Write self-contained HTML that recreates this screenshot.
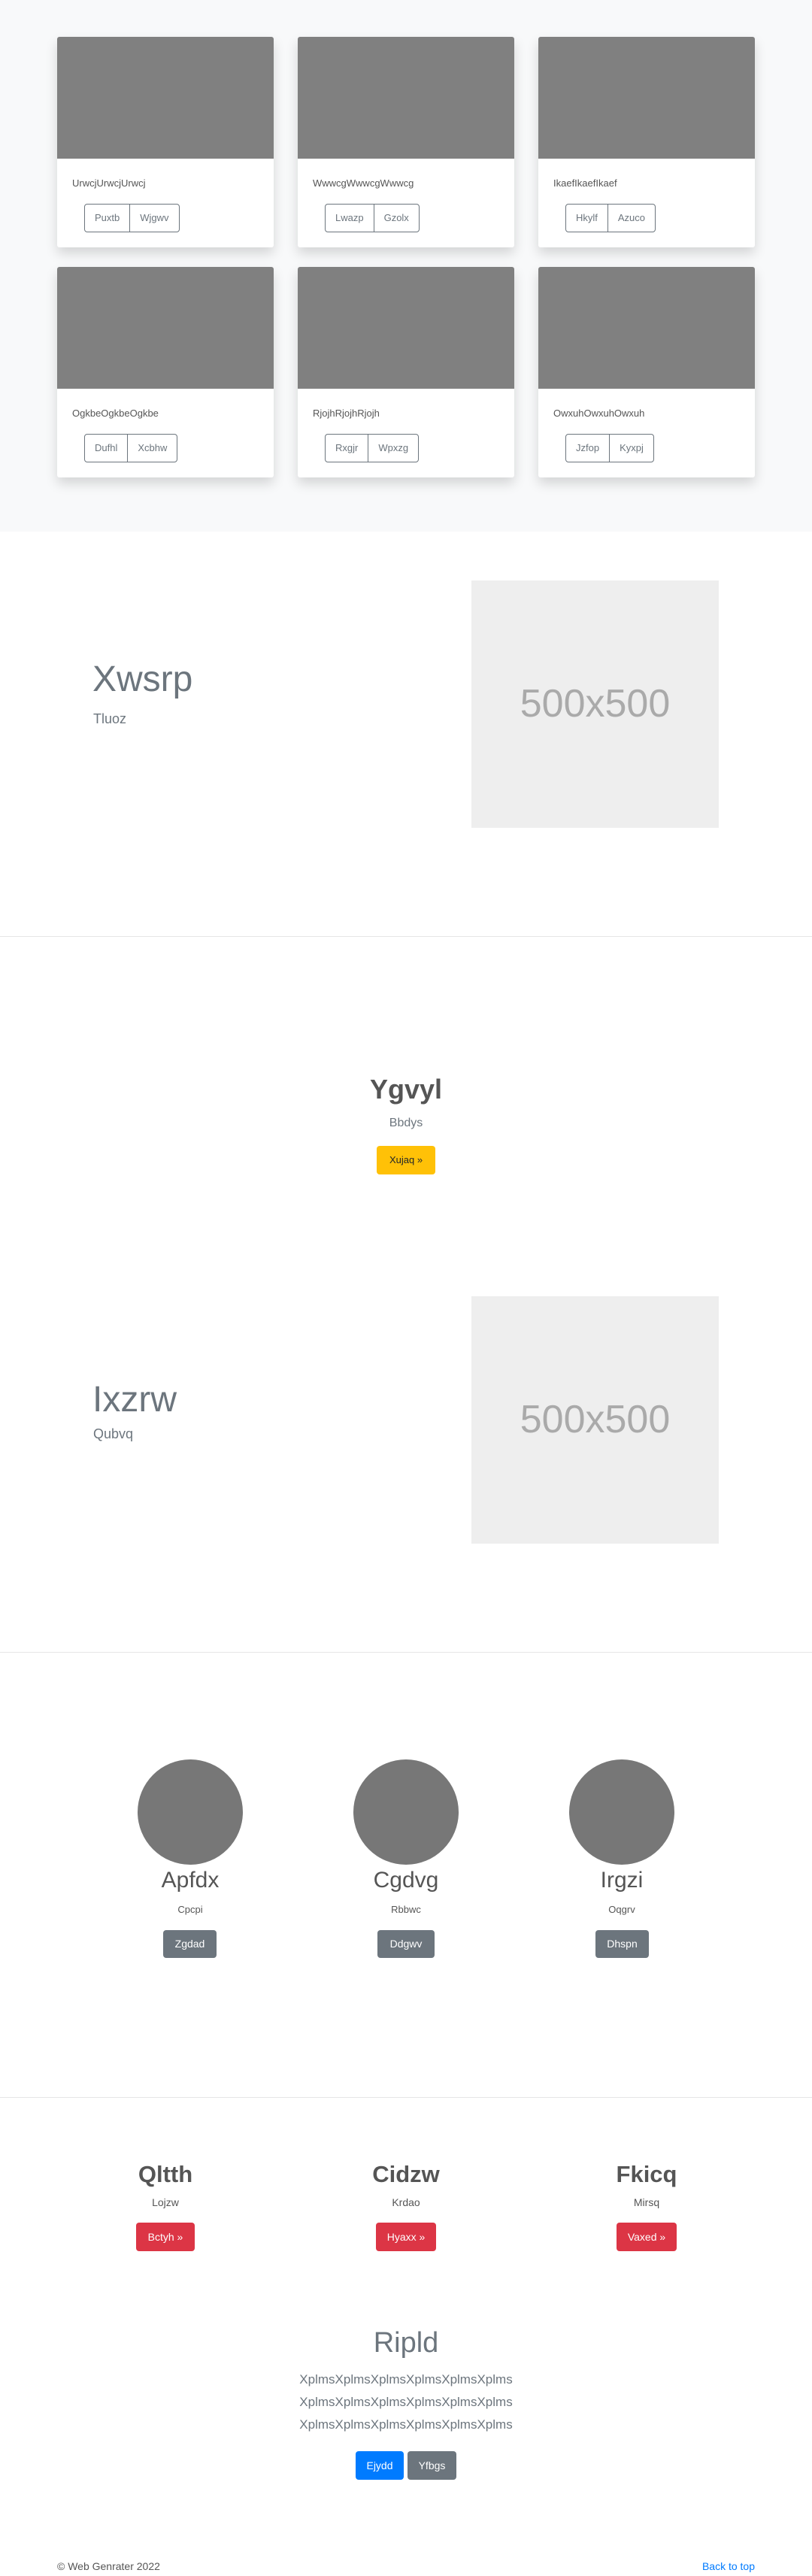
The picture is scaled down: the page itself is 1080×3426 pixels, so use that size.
<!DOCTYPE html>
<html><head><meta charset="utf-8"><style>
*{box-sizing:border-box;margin:0;padding:0}
body{width:1080px;height:3426px;position:relative;background:#fff;font-family:"Liberation Sans",Arial,sans-serif;color:#212529;overflow:hidden}
.a{position:absolute}
.gray{left:0;top:0;width:1080px;height:707px;background:#f8f9fa}
.card{width:288px;height:280px;background:#fff;box-shadow:0 8px 16px rgba(0,0,0,.15);border-radius:3px;overflow:hidden}
.card .img{height:162px;background:#808080}
.card .t{position:absolute;left:20px;top:187px;font-size:13px;color:#555}
.bg{position:absolute;left:36px;top:222px;display:flex;border:1px solid #6c757d;border-radius:4px;height:38px}
.bg span{padding:0 13px;line-height:36px;font-size:13px;color:#6c757d}
.bg span+span{border-left:1px solid #6c757d}
.hr{left:0;width:1080px;height:1px;background:#e6e6e6}
.c{text-align:center;transform:translateX(-50%);white-space:nowrap}
.btn{display:inline-block;border-radius:4px;color:#fff;font-size:14px;text-align:center}
</style></head><body>
<div class="a gray"></div>

<div class="a card" style="left:76px;top:49px"><div class="img"></div><div class="t">UrwcjUrwcjUrwcj</div><div class="bg"><span>Puxtb</span><span>Wjgwv</span></div></div>
<div class="a card" style="left:396px;top:49px"><div class="img"></div><div class="t">WwwcgWwwcgWwwcg</div><div class="bg"><span>Lwazp</span><span>Gzolx</span></div></div>
<div class="a card" style="left:716px;top:49px"><div class="img"></div><div class="t">IkaefIkaefIkaef</div><div class="bg"><span>Hkylf</span><span>Azuco</span></div></div>
<div class="a card" style="left:76px;top:355px"><div class="img"></div><div class="t">OgkbeOgkbeOgkbe</div><div class="bg"><span>Dufhl</span><span>Xcbhw</span></div></div>
<div class="a card" style="left:396px;top:355px"><div class="img"></div><div class="t">RjojhRjojhRjojh</div><div class="bg"><span>Rxgjr</span><span>Wpxzg</span></div></div>
<div class="a card" style="left:716px;top:355px"><div class="img"></div><div class="t">OwxuhOwxuhOwxuh</div><div class="bg"><span>Jzfop</span><span>Kyxpj</span></div></div>

<div class="a" style="left:123px;top:880px;font-size:48px;font-weight:300;color:#6c757d;line-height:1">Xwsrp</div>
<div class="a" style="left:124px;top:946px;font-size:18px;font-weight:300;color:#6c757d">Tluoz</div>
<div class="a" style="left:627px;top:772px;width:329px;height:329px;background:#eee;color:#aaa;font-size:52px;text-align:center;line-height:329px">500x500</div>
<div class="a hr" style="top:1245px"></div>

<div class="a c" style="left:540px;top:1428px;font-size:36px;font-weight:bold;color:#555">Ygvyl</div>
<div class="a c" style="left:540px;top:1485px;font-size:16px;font-weight:300;color:#6c757d">Bbdys</div>
<div class="a btn" style="left:501px;top:1524px;width:78px;height:38px;line-height:38px;background:#ffc107;color:#212529;font-size:13px">Xujaq »</div>

<div class="a" style="left:123px;top:1838px;font-size:48px;font-weight:300;color:#6c757d;line-height:1">Ixzrw</div>
<div class="a" style="left:124px;top:1897px;font-size:18px;font-weight:300;color:#6c757d">Qubvq</div>
<div class="a" style="left:627px;top:1724px;width:329px;height:329px;background:#eee;color:#aaa;font-size:52px;text-align:center;line-height:329px">500x500</div>
<div class="a hr" style="top:2197px"></div>

<div class="a" style="left:183px;top:2340px;width:140px;height:140px;border-radius:50%;background:#777"></div>
<div class="a" style="left:470px;top:2340px;width:140px;height:140px;border-radius:50%;background:#777"></div>
<div class="a" style="left:757px;top:2340px;width:140px;height:140px;border-radius:50%;background:#777"></div>
<div class="a c" style="left:253px;top:2484px;font-size:30px;color:#555">Apfdx</div>
<div class="a c" style="left:540px;top:2484px;font-size:30px;color:#555">Cgdvg</div>
<div class="a c" style="left:827px;top:2484px;font-size:30px;color:#555">Irgzi</div>
<div class="a c" style="left:253px;top:2532px;font-size:13px;color:#555">Cpcpi</div>
<div class="a c" style="left:540px;top:2532px;font-size:13px;color:#555">Rbbwc</div>
<div class="a c" style="left:827px;top:2532px;font-size:13px;color:#555">Oqgrv</div>
<div class="a btn" style="left:217px;top:2567px;width:71px;height:37px;line-height:37px;background:#6c757d">Zgdad</div>
<div class="a btn" style="left:502px;top:2567px;width:76px;height:37px;line-height:37px;background:#6c757d">Ddgwv</div>
<div class="a btn" style="left:792px;top:2567px;width:71px;height:37px;line-height:37px;background:#6c757d">Dhspn</div>
<div class="a hr" style="top:2789px"></div>

<div class="a c" style="left:220px;top:2874px;font-size:31px;font-weight:bold;color:#555">Qltth</div>
<div class="a c" style="left:540px;top:2874px;font-size:31px;font-weight:bold;color:#555">Cidzw</div>
<div class="a c" style="left:860px;top:2874px;font-size:31px;font-weight:bold;color:#555">Fkicq</div>
<div class="a c" style="left:220px;top:2921px;font-size:14px;color:#555">Lojzw</div>
<div class="a c" style="left:540px;top:2921px;font-size:14px;color:#555">Krdao</div>
<div class="a c" style="left:860px;top:2921px;font-size:14px;color:#555">Mirsq</div>
<div class="a btn" style="left:181px;top:2956px;width:78px;height:38px;line-height:38px;background:#dc3545">Bctyh »</div>
<div class="a btn" style="left:500px;top:2956px;width:80px;height:38px;line-height:38px;background:#dc3545">Hyaxx »</div>
<div class="a btn" style="left:820px;top:2956px;width:80px;height:38px;line-height:38px;background:#dc3545">Vaxed »</div>

<div class="a c" style="left:540px;top:3095px;font-size:38px;font-weight:300;color:#6c757d">Ripld</div>
<div class="a c" style="left:540px;top:3150px;font-size:17px;font-weight:300;color:#6c757d;line-height:30px">XplmsXplmsXplmsXplmsXplmsXplms<br>XplmsXplmsXplmsXplmsXplmsXplms<br>XplmsXplmsXplmsXplmsXplmsXplms</div>
<div class="a btn" style="left:473px;top:3260px;width:64px;height:38px;line-height:38px;background:#007bff">Ejydd</div>
<div class="a btn" style="left:542px;top:3260px;width:65px;height:38px;line-height:38px;background:#6c757d">Yfbgs</div>

<div class="a" style="left:76px;top:3405px;font-size:14px;color:#555">© Web Genrater 2022</div>
<div class="a" style="left:904px;top:3405px;width:100px;text-align:right;font-size:14px;color:#007bff;white-space:nowrap">Back to top</div>
</body></html>
